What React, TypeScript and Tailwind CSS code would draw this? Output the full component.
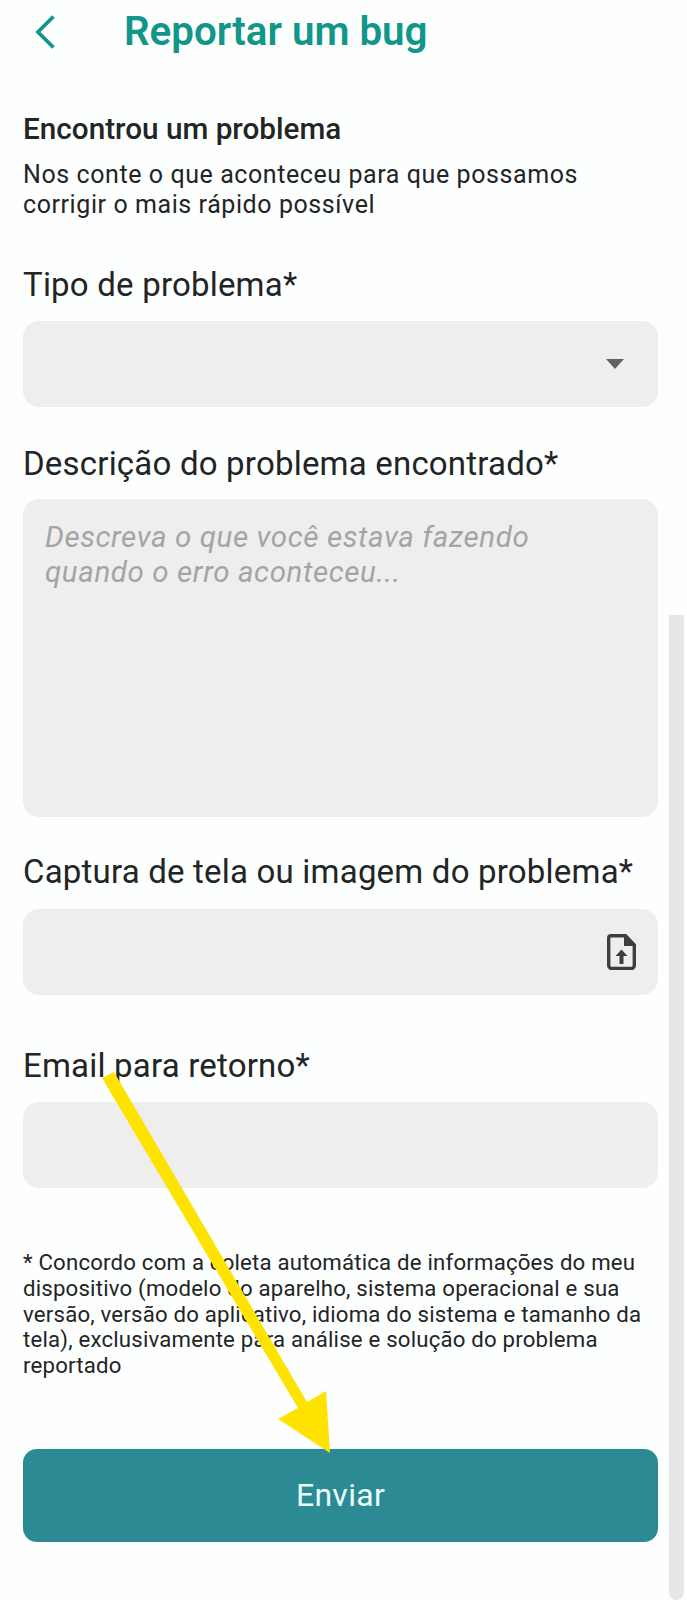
import React from 'react';

const Label: React.FC<{ children: React.ReactNode; className?: string }> = ({ children, className }) => (
  <p className={`text-[33px] leading-[36px] tracking-[0.2px] text-[#222525] ${className ?? ''}`}>{children}</p>
);

const Field: React.FC<{ children?: React.ReactNode; className?: string }> = ({ children, className }) => (
  <div className={`flex h-[86px] items-center justify-end rounded-[16px] bg-[#eeeeee] ${className ?? ''}`}>{children}</div>
);

export default function App() {
  return (
    <div className="relative h-[1600px] w-[687px] overflow-hidden bg-[#fdfefe] font-['Roboto',sans-serif]">
      {/* scroll indicator */}
      <div className="absolute left-[669px] top-[615px] h-[985px] w-[15px] rounded-b-[8px] bg-[#e5e7e7]" />

      <header className="flex h-[64px] items-center pl-[34px]">
        <svg width="22" height="36" viewBox="0 0 22 36" fill="none" aria-hidden="true">
          <path d="M19.500 2.500L4 18L19.500 33.500" stroke="#12968a" strokeWidth="3.800" />
        </svg>
        <h1 className="ml-[68px] text-[40.300px] leading-[44px] font-semibold text-[#12968a]">Reportar um bug</h1>
      </header>

      <main className="w-[658px] pl-[23px] pt-[49px]">
        <h2 className="text-[29.700px] leading-[32px] font-medium text-[#222525]">Encontrou um problema</h2>
        <p className="mt-[15px] max-w-[580px] text-[25px] leading-[30px] tracking-[0.58px] text-[#222525]">
          Nos conte o que aconteceu para que possamos corrigir o mais rápido possível
        </p>

        <Label className="mt-[47px]">Tipo de problema*</Label>
        <Field className="mt-[18px] pr-[34px]">
          <span className="h-0 w-0 border-x-[9px] border-t-[10px] border-x-transparent border-t-[#5f6161]" />
        </Field>

        <Label className="mt-[39px]">Descrição do problema encontrado*</Label>
        <div className="mt-[17px] h-[318px] rounded-[16px] bg-[#eeeeee] pl-[22px] pr-[70px] pt-[21px]">
          <p className="text-[29.500px] leading-[35px] tracking-[0.6px] text-[#a3a5a5] italic">
            Descreva o que você estava fazendo quando o erro aconteceu...
          </p>
        </div>

        <Label className="mt-[37px]">Captura de tela ou imagem do problema*</Label>
        <Field className="mt-[19px] pr-[22px]">
          <svg width="29" height="36" viewBox="0 0 29 36" aria-hidden="true">
            <path d="M4 1.700h14.500L27.300 11v20.500a3 3 0 0 1-3 3h-19.600a3 3 0 0 1-3-3V4a2.300 2.300 0 0 1 2.300-2.300z" fill="none" stroke="#3a3f41" strokeWidth="3.400" />
            <path d="M17 1.500L27.500 12H17z" fill="#3a3f41" />
            <path d="M14.500 15.500l-6 6.500h4v8h4v-8h4z" fill="#3a3f41" />
          </svg>
        </Field>

        <Label className="mt-[53px]">Email para retorno*</Label>
        <Field className="mt-[18px]" />

        <p className="mt-[62px] text-[22.200px] leading-[25.800px] tracking-[0.2px] text-[#222525]">
          * Concordo com a coleta automática de informações do meu dispositivo (modelo do aparelho, sistema operacional e sua versão, versão do aplicativo, idioma do sistema e tamanho da tela), exclusivamente para análise e solução do problema reportado
        </p>

        <button className="mt-[70px] flex h-[93px] w-full items-center justify-center rounded-[14px] bg-[#2b8a94] text-[32px] tracking-[0.3px] text-[#eafcfb]">
          Enviar
        </button>
      </main>

      {/* yellow annotation arrow */}
      <svg className="absolute left-0 top-0" width="687" height="1600" aria-hidden="true">
        <path d="M102 1078L114 1072L307 1402L326 1391L330 1453L278 1419L298 1408Z" fill="#ffe300" />
      </svg>
    </div>
  );
}
